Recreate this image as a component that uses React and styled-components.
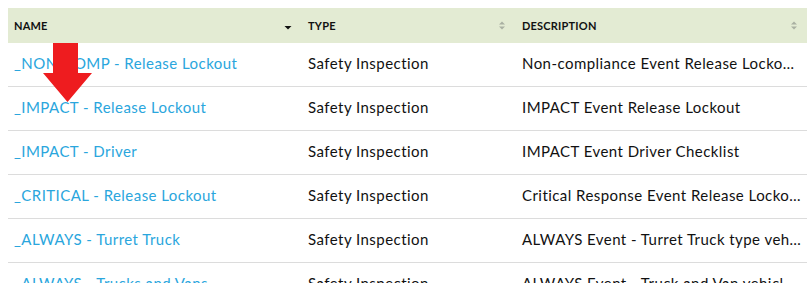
import React from 'react';
import styled, {createGlobalStyle} from "styled-components";

const rows = [
    {name: "_NON-COMP - Release Lockout", type: "Safety Inspection", description: "Non-compliance Event Release Lockout Checklist"},
    {name: "_IMPACT - Release Lockout", type: "Safety Inspection", description: "IMPACT Event Release Lockout"},
    {name: "_IMPACT - Driver", type: "Safety Inspection", description: "IMPACT Event Driver Checklist"},
    {name: "_CRITICAL - Release Lockout", type: "Safety Inspection", description: "Critical Response Event Release Lockout Checklist"},
    {name: "_ALWAYS - Turret Truck", type: "Safety Inspection", description: "ALWAYS Event - Turret Truck type vehicle checklist"},
    {name: "_ALWAYS - Trucks and Vans", type: "Safety Inspection", description: "ALWAYS Event - Truck and Van vehicle checklist"},
];

const SortIcon = ({dir}) => (
    <SortSvg width="8" height="11" viewBox="0 0 8 11">
        {dir === "desc"
            ? <polygon points="0.5,6 7.5,6 4,9.5" fill="#111"/>
            : <>
                <polygon points="1,4.5 7,4.5 4,1.5" fill="#a9b0a2"/>
                <polygon points="1,6.5 7,6.5 4,9.5" fill="#a9b0a2"/>
            </>}
    </SortSvg>
);

const App = () => {
    return (
        <>
            <GlobalStyle/>
            <Table>
                <HeaderRow>
                    <HeaderCell>NAME<SortIcon dir="desc"/></HeaderCell>
                    <HeaderCell>TYPE<SortIcon/></HeaderCell>
                    <HeaderCell>DESCRIPTION<SortIcon/></HeaderCell>
                </HeaderRow>
                {rows.map(row => (
                    <Row key={row.name}>
                        <Cell><NameLink href="#">{row.name}</NameLink></Cell>
                        <Cell>{row.type}</Cell>
                        <Cell>{row.description}</Cell>
                    </Row>
                ))}
                <Pointer width="49" height="59" viewBox="0 0 49 59">
                    <polygon points="10,0 35,0 35,30 49,30 24.5,59 0,30 10,30" fill="#ee1c1f"/>
                </Pointer>
            </Table>
        </>
    );
};

export default App;

const GlobalStyle = createGlobalStyle`
  html, body {
    margin: 0;
    overflow: hidden;
    background: #fff;
  }
  body {
    padding: 8px 0 0 8px;
    font-family: Lato, "Open Sans", sans-serif;
  }
`
const Table = styled.div`
  position: relative;
  width: 800px;
`
const HeaderRow = styled.div`
  display: grid;
  grid-template-columns: 294px 214px 1fr;
  height: 35px;
  background: #e3ebd3;
`
const HeaderCell = styled.div`
  display: flex;
  align-items: center;
  justify-content: space-between;
  padding: 0 10px 0 6px;
  font-size: 11px;
  font-weight: 700;
  letter-spacing: 0.2px;
  color: #111;
`
const SortSvg = styled.svg`
  display: block;
`
const Row = styled.div`
  display: grid;
  grid-template-columns: 294px 214px 1fr;
  height: 43px;
  border-bottom: 1px solid #dcdcdc;
`
const Cell = styled.div`
  min-width: 0;
  padding: 0 6px 0 6px;
  font-size: 15px;
  line-height: 41px;
  letter-spacing: 0.45px;
  color: #111;
  white-space: nowrap;
  overflow: hidden;
  text-overflow: ellipsis;
`
const NameLink = styled.a`
  color: #2aa6dd;
  text-decoration: none;
`
const Pointer = styled.svg`
  position: absolute;
  left: 35px;
  top: 35px;
`
